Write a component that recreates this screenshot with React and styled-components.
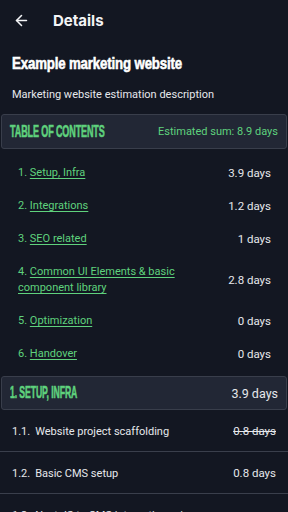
import React from "react";
import styled, { createGlobalStyle } from "styled-components";
import { ArrowLeft } from "lucide-react";

//Global//
const GlobalStyle = createGlobalStyle`
  * {
    box-sizing: border-box;
  }
  body {
    margin: 0;
    background-color: #131722;
    font-family: Roboto, "Liberation Sans", sans-serif;
    color: #e6e8ec;
  }
`;

const GREEN = "#5fd27d";

export const Page = styled.div`
  width: 288px;
  height: 512px;
  overflow: hidden;
  background-color: #131722;
`;

//Top Bar//
export const TopBar = styled.header`
  display: flex;
  align-items: center;
  height: 40px;
  padding-left: 12px;
  gap: 23px;
`;

export const BackButton = styled.button`
  display: flex;
  align-items: center;
  justify-content: center;
  width: 18px;
  height: 18px;
  padding: 0;
  border: none;
  background: none;
  color: #f3f4f6;
`;

export const PageTitle = styled.h1`
  margin: 0;
  font-family: Inter, Roboto, sans-serif;
  font-size: 15px;
  font-weight: 700;
  color: #f3f4f6;
`;

//Condensed display text (no condensed font installed, so squeeze it)//
export const Display = styled.span`
  display: inline-block;
  white-space: nowrap;
  font-family: "Liberation Sans", Arial, sans-serif;
  font-weight: 700;
  font-size: 17px;
  letter-spacing: -0.2px;
  -webkit-text-stroke: 0.6px currentColor;
  transform: scaleX(${(p) => p.$scale || 0.6});
  transform-origin: left center;
`;

//Intro//
export const Intro = styled.section`
  padding: 11px 12px 0;
`;

export const Heading = styled.h2`
  margin: 0;
  line-height: 20px;
  color: #ffffff;
`;

export const Description = styled.p`
  margin: 13px 0 0;
  font-size: 11px;
  line-height: 16px;
  color: #e6e8ec;
`;

//Panels//
export const Panel = styled.div`
  display: flex;
  align-items: center;
  height: ${(p) => p.$height || 34}px;
  margin: ${(p) => p.$top || 0}px 1px 0;
  padding: 0 8px;
  background-color: #222735;
  border: 1px solid #393e4b;
  border-radius: 3px;
`;

export const PanelTitle = styled.div`
  flex: 1;
  min-width: 0;
  color: ${GREEN};
  text-transform: uppercase;
`;

export const PanelValue = styled.span`
  flex: none;
  font-size: ${(p) => p.$size || 11}px;
  color: ${(p) => (p.$green ? GREEN : "#e6e8ec")};
`;

//Table of contents//
export const TocList = styled.ol`
  list-style: none;
  margin: 0;
  padding: 16px 17px 14px 18px;
  display: flex;
  flex-direction: column;
  gap: 17px;
`;

export const TocItem = styled.li`
  display: grid;
  grid-template-columns: 1fr auto;
  align-items: center;
  column-gap: 16px;
  font-size: 11px;
  line-height: 16px;
`;

export const TocLabel = styled.span`
  color: ${GREEN};
`;

export const TocLink = styled.a`
  color: ${GREEN};
  text-decoration: underline;
  text-underline-offset: 2px;
`;

export const Days = styled.span`
  color: #e6e8ec;
  font-size: 11.5px;
  white-space: nowrap;
  text-decoration: ${(p) => (p.$struck ? "line-through" : "none")};
`;

//Tasks//
export const TaskList = styled.div`
  display: flex;
  flex-direction: column;
`;

export const TaskRow = styled.div`
  display: flex;
  align-items: center;
  justify-content: space-between;
  height: 42px;
  padding: 1px 12px 0;
  border-bottom: 1px solid #3a3f4c;
  font-size: 11px;
`;

export const TaskName = styled.span`
  display: flex;
  gap: 5px;
`;

const toc = [
  ["Setup, Infra", "3.9 days"],
  ["Integrations", "1.2 days"],
  ["SEO related", "1 days"],
  ["Common UI Elements & basic component library", "2.8 days"],
  ["Optimization", "0 days"],
  ["Handover", "0 days"],
];

const tasks = [
  ["1.1.", "Website project scaffolding", "0.8 days", true],
  ["1.2.", "Basic CMS setup", "0.8 days", false],
  ["1.3.", "Next.JS to CMS integration w/", "", false],
];

export default function App() {
  return (
    <Page>
      <GlobalStyle />
      <TopBar>
        <BackButton>
          <ArrowLeft size={17} strokeWidth={2.2} />
        </BackButton>
        <PageTitle>Details</PageTitle>
      </TopBar>

      <Intro>
        <Heading>
          <Display $scale={0.78}>Example marketing website</Display>
        </Heading>
        <Description>Marketing website estimation description</Description>
      </Intro>

      <Panel $top={11} $height={35}>
        <PanelTitle>
          <Display $scale={0.53}>Table of contents</Display>
        </PanelTitle>
        <PanelValue $green>Estimated sum: 8.9 days</PanelValue>
      </Panel>

      <TocList>
        {toc.map(([name, days], i) => (
          <TocItem key={name}>
            <TocLabel>
              {i + 1}. <TocLink href="#">{name}</TocLink>
            </TocLabel>
            <Days>{days}</Days>
          </TocItem>
        ))}
      </TocList>

      <Panel $height={34}>
        <PanelTitle>
          <Display $scale={0.51}>1. Setup, Infra</Display>
        </PanelTitle>
        <PanelValue $size={12.5}>3.9 days</PanelValue>
      </Panel>

      <TaskList>
        {tasks.map(([num, name, days, struck]) => (
          <TaskRow key={num}>
            <TaskName>
              <span>{num}</span>
              <span>{name}</span>
            </TaskName>
            <Days $struck={struck}>{days}</Days>
          </TaskRow>
        ))}
      </TaskList>
    </Page>
  );
}
